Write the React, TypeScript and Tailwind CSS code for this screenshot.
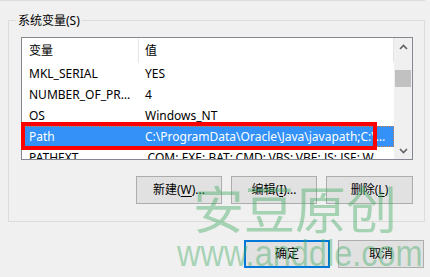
import React from "react";

function Btn({ w, children, primary }: { w: string; children: React.ReactNode; primary?: boolean }) {
  return (
    <div
      className={`${w} h-[28px] flex items-center justify-center bg-[#e1e1e1] ${
        primary ? "border-2 border-[#0078d7]" : "border border-[#adadad]"
      }`}
    >
      {children}
    </div>
  );
}

const rows = [
  { k: "MKL_SERIAL", v: "YES" },
  { k: "NUMBER_OF_PROCESSORS", v: "4" },
  { k: "OS", v: "Windows_NT" },
  { k: "Path", v: "C:\\ProgramData\\Oracle\\Java\\javapath;C:\\Windows\\system32", sel: true },
  { k: "PATHEXT", v: ".COM;.EXE;.BAT;.CMD;.VBS;.VBE;.JS;.JSE;.WSF;.WSH;.MSC" },
];

export default function App() {
  return (
    <div className="relative w-[430px] h-[277px] overflow-hidden bg-[#f0f0f0] text-[12px] leading-none text-black font-['Noto_Sans','Noto_Sans_CJK_SC',sans-serif]">
      <div className="h-px w-[425px] bg-[#dcdcdc]" />
      <div className="relative ml-[8px] mt-[19px] w-[417px] h-[202px] border border-[#dcdcdc] pt-[16px] pl-[12px]">
        <div className="absolute -top-[10px] left-[7px] px-[2px] bg-[#f0f0f0] leading-[20px]">系统变量(S)</div>
        <div className="w-[392px] h-[123px] border border-[#828790] bg-white flex overflow-hidden">
          <div className="w-[372px] flex flex-col">
            <div className="h-[25px] flex shrink-0">
              <div className="w-[116px] flex items-center pl-[7px]">变量</div>
              <div className="w-px h-[24px] mt-px bg-[#e5e5e5]" />
              <div className="w-[254px] flex items-center pl-[6px]">值</div>
              <div className="w-px h-[24px] bg-[#e5e5e5]" />
            </div>
            {rows.map((r) => (
              <div
                key={r.k}
                className={`h-[21px] shrink-0 flex items-center ${
                  r.sel ? "bg-[#3391f7] text-white outline-1 outline-dotted outline-[#d08040] -outline-offset-1" : ""
                }`}
              >
                <div className="w-[117px] pl-[7px] pr-[5px] truncate leading-[21px]">{r.k}</div>
                <div className="w-[255px] pl-[6px] pr-[6px] truncate leading-[21px]">{r.v}</div>
              </div>
            ))}
          </div>
          <div className="flex-1 bg-[#f0f0f0] flex flex-col">
            <div className="h-[17px] flex items-center justify-center">
              <svg width="9" height="6" viewBox="0 0 9 6">
                <polyline points="1,5 4.5,1.5 8,5" fill="none" stroke="#606060" strokeWidth="1.6" />
              </svg>
            </div>
            <div className="mt-[15px] mx-px h-[17px] bg-[#c1c1c1]" />
            <div className="flex-1" />
            <div className="h-[17px] flex items-center justify-center">
              <svg width="9" height="6" viewBox="0 0 9 6">
                <polyline points="1,1 4.5,4.5 8,1" fill="none" stroke="#606060" strokeWidth="1.6" />
              </svg>
            </div>
          </div>
        </div>
        <div className="mt-[16px] w-[392px] flex justify-end gap-[9px]">
          <Btn w="w-[86px]">
            <span>
              新建(<span className="underline underline-offset-2">W</span>)...
            </span>
          </Btn>
          <Btn w="w-[86px]">
            <span>
              编辑(<span className="underline underline-offset-2">I</span>)...
            </span>
          </Btn>
          <Btn w="w-[87px]">
            <span>
              删除(<span className="underline underline-offset-2">L</span>)
            </span>
          </Btn>
        </div>
      </div>
      <div className="mt-[18px] pr-[6px] flex justify-end gap-[8px]">
        <Btn w="w-[86px]" primary>
          确定
        </Btn>
        <Btn w="w-[86px]">取消</Btn>
      </div>

      {/* red annotation */}
      <div className="absolute left-[21px] top-[122px] w-[356px] h-[28px] border-4 border-[#ff0000]" />

      {/* watermark */}
      <div className="absolute left-[193px] top-[182px] text-[51px] leading-none whitespace-nowrap text-[rgba(60,170,95,0.42)] font-['Noto_Sans_CJK_SC',sans-serif] font-normal">
        安豆原创
      </div>
      <div className="absolute left-[177px] top-[240px] text-[32.5px] leading-none whitespace-nowrap origin-bottom scale-y-[1.15] text-[rgba(60,170,95,0.42)] font-['Liberation_Sans',sans-serif]">
        www.anddle.com
      </div>
    </div>
  );
}
